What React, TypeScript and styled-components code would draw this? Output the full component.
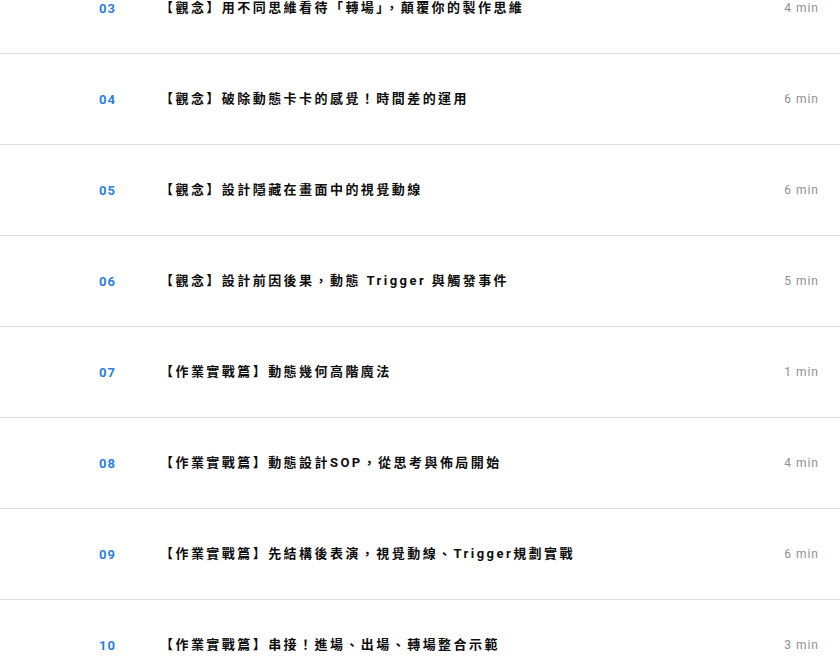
import React from "react";
import styled, { createGlobalStyle } from "styled-components";

const Global = createGlobalStyle`
  html, body { margin: 0; padding: 0; background: #fff; overflow: hidden; }
  body { font-family: Roboto, "Noto Sans CJK TC", sans-serif; }
`;

const List = styled.ul`
  list-style: none;
  margin: -37px 0 0 0;
  padding: 0;
`;

const Row = styled.li`
  display: flex;
  align-items: center;
  height: 90px;
  border-bottom: 1px solid #dcdcdc;
  padding: 0 21px 0 99px;
`;

const Num = styled.span`
  width: 61px;
  flex: none;
  font-family: Roboto, sans-serif;
  font-weight: 700;
  font-size: 13px;
  letter-spacing: 1px;
  color: #2b7fe3;
`;

const Title = styled.span`
  flex: 1;
  font-family: Roboto, "Noto Sans CJK TC", sans-serif;
  font-weight: 700;
  font-size: 13px;
  line-height: 18px;
  letter-spacing: 2.45px;
  color: #0d0d0d;
  white-space: nowrap;
`;

const Dur = styled.span`
  flex: none;
  font-family: Roboto, sans-serif;
  font-size: 12px;
  letter-spacing: 1px;
  color: #8f8f8f;
`;

const items: [string, string, string][] = [
  ["03", "【觀念】用不同思維看待「轉場」，顛覆你的製作思維", "4 min"],
  ["04", "【觀念】破除動態卡卡的感覺！時間差的運用", "6 min"],
  ["05", "【觀念】設計隱藏在畫面中的視覺動線", "6 min"],
  ["06", "【觀念】設計前因後果，動態 Trigger 與觸發事件", "5 min"],
  ["07", "【作業實戰篇】動態幾何高階魔法", "1 min"],
  ["08", "【作業實戰篇】動態設計SOP，從思考與佈局開始", "4 min"],
  ["09", "【作業實戰篇】先結構後表演，視覺動線、Trigger規劃實戰", "6 min"],
  ["10", "【作業實戰篇】串接！進場、出場、轉場整合示範", "3 min"],
];

export default function App() {
  return (
    <>
      <Global />
      <List>
        {items.map(([n, t, d]) => (
          <Row key={n}>
            <Num>{n}</Num>
            <Title>{t}</Title>
            <Dur>{d}</Dur>
          </Row>
        ))}
      </List>
    </>
  );
}
